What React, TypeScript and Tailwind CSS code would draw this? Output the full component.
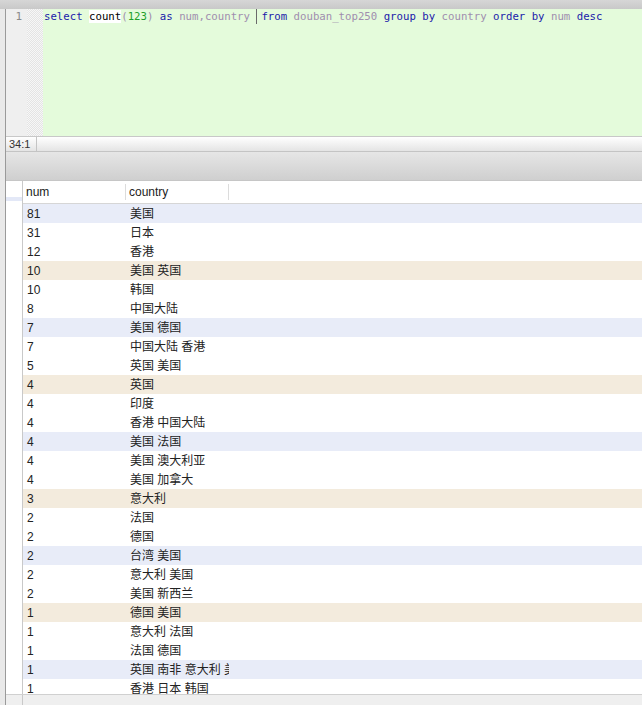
import React from 'react'

const rows: [string, string][] = [
  ['81', '美国'],
  ['31', '日本'],
  ['12', '香港'],
  ['10', '美国 英国'],
  ['10', '韩国'],
  ['8', '中国大陆'],
  ['7', '美国 德国'],
  ['7', '中国大陆 香港'],
  ['5', '英国 美国'],
  ['4', '英国'],
  ['4', '印度'],
  ['4', '香港 中国大陆'],
  ['4', '美国 法国'],
  ['4', '美国 澳大利亚'],
  ['4', '美国 加拿大'],
  ['3', '意大利'],
  ['2', '法国'],
  ['2', '德国'],
  ['2', '台湾 美国'],
  ['2', '意大利 美国'],
  ['2', '美国 新西兰'],
  ['1', '德国 美国'],
  ['1', '意大利 法国'],
  ['1', '法国 德国'],
  ['1', '英国 南非 意大利 美国'],
  ['1', '香港 日本 韩国'],
]

const mono = { fontFamily: '"DejaVu Sans Mono", "Liberation Mono", monospace' }
const sans = { fontFamily: '"Liberation Sans", Arial, "Noto Sans CJK SC", sans-serif' }

function rowBg(i: number) {
  if (i % 6 === 0) return 'bg-[#e8ecf8]'
  if (i % 6 === 3) return 'bg-[#f3ebdd]'
  return 'bg-white'
}

export default function App() {
  return (
    <div className="w-[642px] h-[705px] overflow-hidden flex flex-col bg-white">
      {/* top strip */}
      <div className="h-[9px] bg-gradient-to-b from-[#d6d6d6] to-[#c9c9c9]" />

      <div className="flex-1 flex min-h-0">
        {/* left edge */}
        <div className="w-[6px] bg-[#e9e9e9] border-r border-[#9a9a9a]" />

        <div className="flex-1 flex flex-col min-w-0">
          {/* editor */}
          <div className="h-[128px] flex border-b border-[#c8c8c8] bg-[#e4fbdb]">
            <div className="w-[21px] bg-[#efefef] text-[#8a8a8a] text-[11px] text-right pr-[5px] pt-0 leading-[15px]" style={mono}>
              1
            </div>
            <div className="w-[16px] bg-[repeating-conic-gradient(#e4e4e4_0_25%,#f7f7f7_0_50%)] bg-[length:2px_2px]" />
            <div className="pl-px pt-0 text-[10.7px] leading-[15px] whitespace-pre" style={mono}>
              <span className="text-[#1a1aaa]">select</span>{' '}
              <span className="bg-white text-black">count</span>
              <span className="text-[#a08eae]">(</span>
              <span className="text-[#1f9e2a]">123</span>
              <span className="text-[#a08eae]">)</span>{' '}
              <span className="text-[#1a1aaa]">as</span>{' '}
              <span className="text-[#a08eae]">num,country </span>
              <span className="inline-block w-px h-[15px] bg-[#6a6a6a] align-[-4px] mr-[4px]" />
              <span className="text-[#1a1aaa]">from</span>{' '}
              <span className="text-[#a08eae]">douban_top250</span>{' '}
              <span className="text-[#1a1aaa]">group by</span>{' '}
              <span className="text-[#a08eae]">country</span>{' '}
              <span className="text-[#1a1aaa]">order by</span>{' '}
              <span className="text-[#a08eae]">num</span>{' '}
              <span className="text-[#1a1aaa]">desc</span>
            </div>
          </div>

          {/* status bar */}
          <div className="h-[15px] flex bg-gradient-to-b from-white to-[#e4e4e4] border-b border-[#c4c4c4]">
            <div className="w-[31px] pl-[3px] text-[11px] leading-[15px] text-[#333] border-r border-[#c4c4c4]" style={sans}>
              34:1
            </div>
          </div>

          {/* toolbar */}
          <div className="h-[29px] bg-gradient-to-b from-[#e6e6e6] to-[#cfcfcf] border-b border-[#c6c6c6]" />

          {/* results table */}
          <div className="flex-1 min-h-0 overflow-hidden flex" style={sans}>
            <div className="w-[17px] border-r border-[#c9c9c9] bg-white flex flex-col">
              <div className="h-[23px] flex flex-col justify-end">
                <div className="h-[4px] bg-[#e3e8f7] mb-[3px]" />
              </div>
            </div>
            <div className="flex-1 flex flex-col min-w-0">
              <div className="h-[23px] shrink-0 flex items-center border-b border-[#d6d6d6] text-[12px] text-[#222]">
                <div className="w-[103px] pl-[3px] h-[16px] leading-[16px] border-r border-[#dcdcdc]">num</div>
                <div className="w-[103px] pl-[3px] h-[16px] leading-[16px] border-r border-[#dcdcdc]">country</div>
              </div>
              {rows.map(([n, c], i) => (
                <div key={i} className={`h-[19px] shrink-0 flex items-center text-[12px] text-[#222] ${rowBg(i)}`}>
                  <div className="w-[103px] pl-[4px]">{n}</div>
                  <div className="w-[103px] pl-[4px] whitespace-nowrap overflow-hidden">{c}</div>
                </div>
              ))}
            </div>
          </div>

          {/* bottom area */}
          <div className="h-[11px] shrink-0 flex bg-[#efefef] border-t border-[#d0d0d0]">
            <div className="w-[17px] border-r border-[#c9c9c9]" />
          </div>
        </div>
      </div>
    </div>
  )
}
